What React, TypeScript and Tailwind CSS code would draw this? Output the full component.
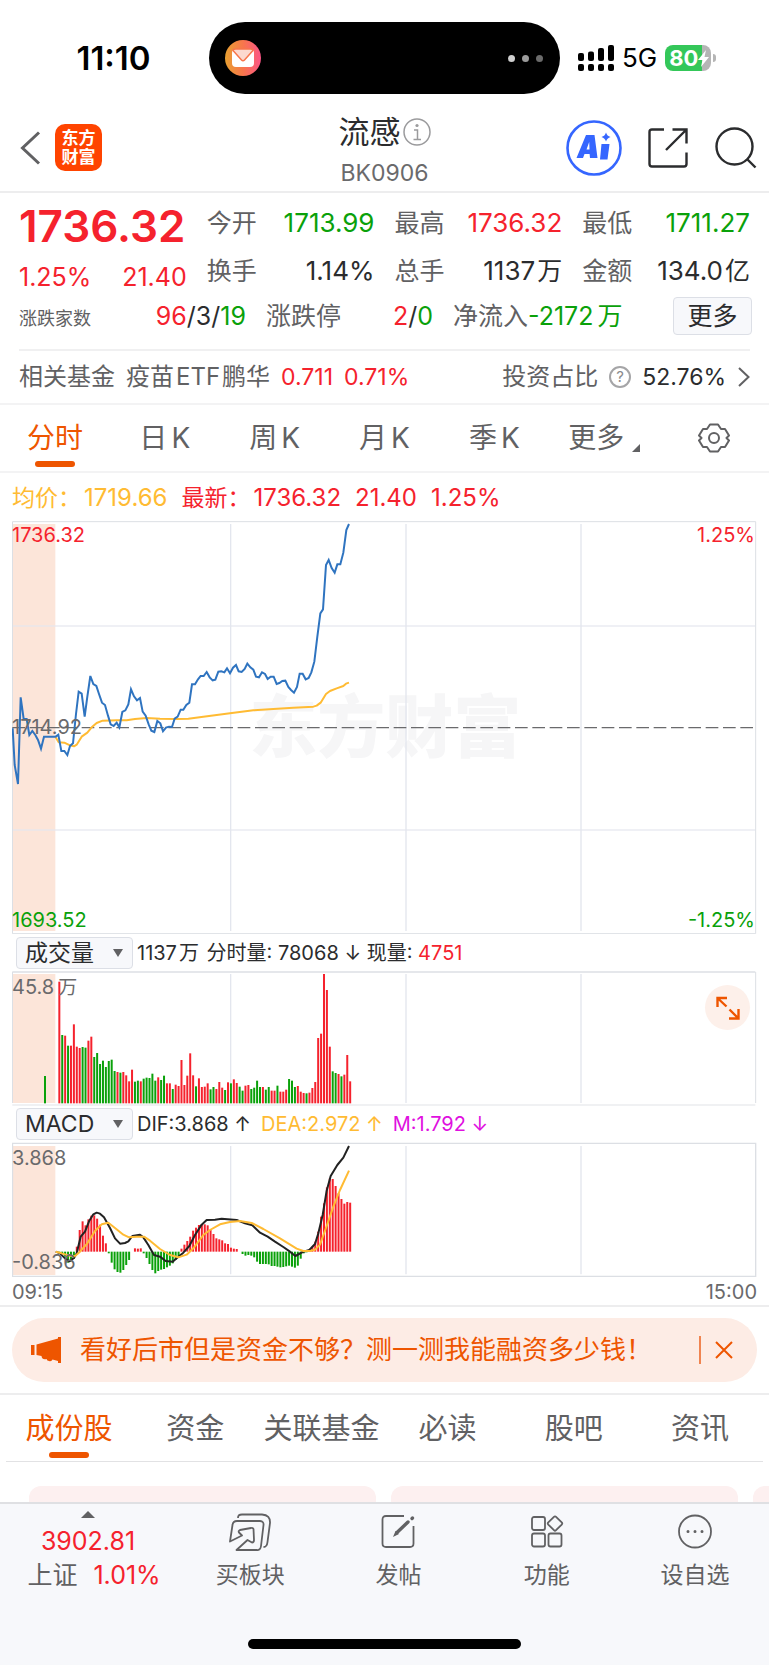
import React from 'react';

const RED = '#f5222d';
const GREEN = '#0aa10a';
const GRID = '#e3e6ee';

// First bar of the session and the distance between two bars, in chart units
const BAR_START = 178;
const BAR_STEP = 8.725;

const PRICE_LINE =
    '38,655 44,765 54,822 62,562 71,627 80,627 88,675 97,663 106,675 114,690 123,716 132,680 167,680 175,674 184,723 193,723 202,735 210,708 219,700 228,612 236,545 245,551 254,620 262,560 271,498 280,522 289,528 297,552 306,578 315,585 324,617 332,643 341,648 350,638 358,652 367,606 376,601 385,583 393,538 402,559 411,571 420,564 428,605 437,617 446,643 454,662 463,666 472,633 481,640 489,664 498,653 507,650 516,651 524,626 533,620 542,599 550,599 559,585 568,578 576,523 585,523 594,508 602,498 611,498 620,486 629,502 638,511 646,509 655,485 664,484 673,487 681,475 690,490 699,473 708,465 716,484 725,486 734,477 742,461 751,472 760,479 768,500 777,502 786,487 795,492 803,507 812,500 821,500 830,522 838,519 847,513 856,512 865,531 873,540 882,548 891,531 899,491 908,491 917,508 926,504 934,487 943,455 952,380 961,310 969,298 978,165 986,150 995,174 1004,188 1012,163 1021,163 1030,128 1039,60 1047,42';

const AVERAGE_LINE =
    '167,682 176,697 193,698 210,706 222,709 230,704 245,680 262,668 275,652 290,639 308,632 350,631 380,631 405,627 440,624 480,626 530,627 565,626 610,620 690,610 760,601 820,597 880,593 940,590 950,587 962,578 978,552 990,543 1010,535 1030,528 1038,521 1047,518';

const DIF_LINE =
    '167,455 180,460 195,475 208,484 222,474 230,460 242,410 255,395 268,362 280,343 290,338 300,341 312,352 330,384 345,415 360,431 375,429 385,424 397,408 420,404 430,412 445,435 462,465 480,470 497,483 518,485 535,470 550,458 568,438 585,405 605,374 620,360 645,359 665,356 710,360 735,370 757,376 780,398 803,410 825,425 850,441 870,455 886,468 897,462 910,455 928,450 945,432 955,400 968,345 980,272 992,228 1012,195 1030,173 1047,138';

const DEA_LINE =
    '167,455 185,460 208,467 225,468 240,455 262,430 285,393 305,373 325,368 345,384 370,404 387,412 410,410 432,410 450,422 480,447 510,465 535,472 560,464 580,445 610,405 630,390 660,373 690,366 720,363 755,369 790,387 840,415 890,446 910,453 930,453 945,449 960,434 980,378 1000,320 1020,270 1047,212';

const VOLUME = [
    185, 345, 347, 377, 377, 313, 380, 384, 381, 383, 362, 350, 411, 399, 432, 422, 441, 423, 419, 453,
    456, 458, 456, 466, 484, 449, 485, 482, 484, 476, 473, 474, 461, 482, 472, 480, 467, 490, 490, 507,
    494, 498, 420, 495, 467, 400, 466, 499, 475, 501, 500, 490, 508, 501, 507, 486, 503, 510, 487, 490,
    478, 489, 500, 512, 497, 495, 507, 503, 482, 501, 501, 509, 501, 512, 512, 497, 515, 515, 509, 477,
    482, 501, 498, 515, 519, 520, 518, 504, 486, 354, 341, 162, 210, 380, 454, 459, 462, 469, 464, 405,
    484,
];

// One letter per volume bar: r = up, g = down
const VOLUME_SIDE =
    'rgrgrrrrggrrgggggggg' + 'rgrrrrggrgggggrggrrg' + 'rrrrrrrgrrrrggrrrgrg' + 'rrggrrggggrggrrgrrrg' + 'ggrrrgrrrrrrrrggrgrrr';

const MACD = [
    457, 462, 470, 488, 484, 476, 440, 390, 364, 376, 358, 347, 346, 356, 374, 407, 430, 460, 488, 508,
    516, 518, 510, 495, 480, 455, 445, 446, 445, 460, 474, 492, 510, 520, 513, 509, 507, 502, 497, 490,
    480, 470, 446, 434, 423, 410, 392, 383, 375, 372, 373, 376, 390, 402, 415, 418, 421, 430, 432, 443,
    446, 447, 455, 462, 467, 465, 467, 472, 485, 492, 492, 492, 493, 498, 498, 500, 502, 501, 499, 497,
    500, 503, 497, 476, 460, 457, 448, 440, 425, 395, 350, 310, 262, 235, 237, 258, 280, 297, 311, 306,
    308,
];

const QUOTES = [
    { label: '今开', value: '1713.99', unit: '', color: 'text-[#0aa10a]' },
    { label: '最高', value: '1736.32', unit: '', color: 'text-[#f5222d]' },
    { label: '最低', value: '1711.27', unit: '', color: 'text-[#0aa10a]' },
    { label: '换手', value: '1.14%', unit: '', color: 'text-[#2b2c2e]' },
    { label: '总手', value: '1137', unit: '万', color: 'text-[#2b2c2e]' },
    { label: '金额', value: '134.0', unit: '亿', color: 'text-[#2b2c2e]' },
];

const SECTION_TABS = ['成份股', '资金', '关联基金', '必读', '股吧', '资讯'];

function StatusBar() {
    return (
        <div className="flex h-[94px] items-center pt-[22px] text-black">
            <div className="flex-1 pl-[18px] text-center text-[33px] font-semibold">11:10</div>
            <div className="flex h-[72px] w-[351px] items-center justify-between rounded-full bg-black pr-[17px] pl-4">
                <svg viewBox="0 0 36 36" className="size-9" aria-hidden="true">
                    <defs>
                        <linearGradient id="mail" x1="0" y1="0" x2="1" y2="0">
                            <stop offset="0" stopColor="#e8a030" />
                            <stop offset="0.5" stopColor="#f8764c" />
                            <stop offset="1" stopColor="#fb5586" />
                        </linearGradient>
                    </defs>
                    <circle cx="18" cy="18" r="18" fill="url(#mail)" />
                    <rect x="7" y="9" width="22" height="18" rx="4" fill="#fff" />
                    <path d="M8 10.500Q8 9 11 9H25Q28 9 28 10.500L19.500 20Q18 21.500 16.500 20Z" fill="#fcd9cf" stroke="#f8764c" strokeWidth="1.500" />
                </svg>
                <span className="flex gap-[7px]">
                    <i className="size-[7px] rounded-full bg-[#cfcfcf]" />
                    <i className="size-[7px] rounded-full bg-[#9b9b9b]" />
                    <i className="size-[7px] rounded-full bg-[#6b6b6b]" />
                </span>
            </div>
            <div className="flex flex-1 items-center pl-[18px]">
                <svg viewBox="0 0 36 26" className="h-[26px] w-9" aria-hidden="true">
                    <rect x="0" y="8" width="6" height="8" rx="2" />
                    <rect x="10" y="6.500" width="6" height="9.500" rx="2" />
                    <rect x="20" y="3" width="6" height="13" rx="2" />
                    <rect x="30" y="0" width="6" height="16" rx="2" />
                    <rect x="0" y="19" width="6" height="7" rx="2" />
                    <rect x="10" y="19" width="6" height="7" rx="2" />
                    <rect x="20" y="19" width="6" height="7" rx="2" />
                    <rect x="30" y="19" width="6" height="7" rx="2" />
                </svg>
                <span className="ml-2 text-[26px]">5G</span>
                <span className="ml-2 flex h-[26px] w-[46px] items-center rounded-lg bg-linear-to-r from-[#34c759] from-80% to-[#b5b5b5] to-80% pl-1 text-[22px] font-bold text-white">
                    80
                    <svg viewBox="0 0 11 17" className="h-[17px] w-[11px]" fill="#fff" aria-hidden="true">
                        <path d="M8 0L0 10H4.500L3 17L11 7H6.500Z" />
                    </svg>
                </span>
                <i className="ml-0.5 h-2 w-[3px] rounded-r-full bg-[#b5b5b5]" />
            </div>
        </div>
    );
}

function Header() {
    return (
        <header className="flex h-[99px] items-center justify-between border-b-2 border-[#ededee] px-3 pt-2.5">
            <div className="flex flex-1 items-center gap-3.5">
                <button type="button" aria-label="返回" className="ml-2">
                    <svg viewBox="0 0 21 34" className="h-[34px] w-[21px]" fill="none" stroke="#616163" strokeWidth="3">
                        <path d="M19 1.500L2.500 17L19 32.500" />
                    </svg>
                </button>
                <div className="flex size-[47px] flex-col items-center justify-center rounded-[10px] bg-[#ff4400] text-[17px] leading-[19px] font-bold text-white">
                    <span>东方</span>
                    <span>财富</span>
                </div>
            </div>
            <div className="flex flex-col items-center pt-1.5">
                <h1 className="flex items-center text-[31px] leading-[34px] text-[#2b2c2e]">
                    流感
                    <svg viewBox="0 0 28 28" className="ml-0.5 size-7" fill="none" stroke="#9b9b9d" strokeWidth="1.500" aria-hidden="true">
                        <circle cx="14" cy="14" r="13" />
                        <circle cx="14" cy="7.500" r="1.600" fill="#9b9b9d" stroke="none" />
                        <path d="M11 12H14.500V21.500M10.500 21.500H18" />
                    </svg>
                </h1>
                <span className="mt-2.5 text-[23px] leading-[28px] text-[#6a6a6c]">BK0906</span>
            </div>
            <div className="flex flex-1 items-center justify-end">
                <button type="button" aria-label="AI">
                    <svg viewBox="0 0 56 56" className="size-14" fill="#3566ff">
                        <circle cx="28" cy="28" r="26.500" fill="none" stroke="#3566ff" strokeWidth="2.600" />
                        <path d="M20 15H28.500L31.500 38H24L23.600 34H18.500L17 38H10.500ZM23.200 22L20.500 29.500H23.500Z" fillRule="evenodd" />
                        <path d="M35.500 24H43.500L41.500 39.500H34Z" />
                        <path d="M40 12.500Q41 16 44.500 17Q41 18 40 21.500Q39 18 35.500 17Q39 16 40 12.500Z" />
                    </svg>
                </button>
                <button type="button" aria-label="分享" className="ml-[26px]">
                    <svg viewBox="0 0 40 40" className="size-10" fill="none" stroke="#2b2c2e" strokeWidth="2.400">
                        <path d="M16 1.500H4Q1.500 1.500 1.500 4V36Q1.500 38.500 4 38.500H36Q38.500 38.500 38.500 36V24.500M24.500 1.500H38.500V15.500M38 2L18 22" />
                    </svg>
                </button>
                <button type="button" aria-label="搜索" className="ml-[27px]">
                    <svg viewBox="0 0 42 42" className="size-[42px]" fill="none" stroke="#2b2c2e" strokeWidth="2.400">
                        <circle cx="19.500" cy="19.500" r="18" />
                        <path d="M32 32L40.500 40.500" />
                    </svg>
                </button>
            </div>
        </header>
    );
}

function QuotePanel() {
    return (
        <section className="border-b-2 border-[#f3f3f4] px-[19px] pt-1.5 text-[25px]">
            <div className="grid grid-cols-4 gap-x-5">
                <div className="row-span-2 -mb-1.5 text-[#f5222d]">
                    <div className="text-[44px] leading-[54px] font-semibold">1736.32</div>
                    <div className="flex justify-between leading-[48px]">
                        <span>1.25%</span>
                        <span>21.40</span>
                    </div>
                </div>
                {QUOTES.map((quote) => (
                    <div key={quote.label} className="flex h-12 items-center justify-between whitespace-nowrap">
                        <span className="text-[#616163]">{quote.label}</span>
                        <span className={quote.color}>
                            <span className="text-[26px]">{quote.value}</span>
                            {quote.unit && <span className="ml-0.5">{quote.unit}</span>}
                        </span>
                    </div>
                ))}
            </div>
            <div className="flex items-center gap-5 border-b-2 border-[#f0f0f1] pt-0.5 pb-3.5 leading-[38px] whitespace-nowrap">
                <div className="flex w-[227px] items-center justify-between">
                    <span className="pt-1.5 text-lg leading-8 text-[#616163]">涨跌家数</span>
                    <span className="text-[#2b2c2e]">
                        <span className="text-[#f5222d]">96</span>/3/<span className="text-[#0aa10a]">19</span>
                    </span>
                </div>
                <div className="flex w-[167px] justify-between">
                    <span className="text-[#616163]">涨跌停</span>
                    <span className="text-[#2b2c2e]">
                        <span className="text-[#f5222d]">2</span>/<span className="text-[#0aa10a]">0</span>
                    </span>
                </div>
                <div>
                    <span className="text-[#616163]">净流入</span>
                    <span className="text-[#0aa10a]">
                        -2172<span className="ml-1">万</span>
                    </span>
                </div>
                <button type="button" className="-mr-0.5 ml-auto h-[38px] w-[79px] rounded border border-[#dcdfe6] bg-[#f7f8fb] leading-9 text-[#2b2c2e]">
                    更多
                </button>
            </div>
            <div className="flex h-[52px] items-center text-2xl whitespace-nowrap">
                <a href="#funds" className="flex items-center gap-[11px] text-[#f5222d]">
                    <span className="text-[#616163]">相关基金</span>
                    <span className="text-[#616163]">
                        疫苗<span className="mx-0.5">ETF</span>鹏华
                    </span>
                    <span className="text-[23px]">0.711</span>
                    <span className="text-[23px]">0.71%</span>
                </a>
                <a href="#ratio" className="ml-auto flex items-center text-[#2b2c2e]">
                    <span className="text-[#616163]">投资占比</span>
                    <span className="mx-[11px] flex size-[22px] items-center justify-center rounded-full border-2 border-[#a5a5a7] text-[15px] text-[#8a8a8c]">?</span>
                    <span className="text-[23px]">52.76%</span>
                    <svg viewBox="0 0 12 20" className="ml-3 h-5 w-3" fill="none" stroke="#616163" strokeWidth="2" aria-hidden="true">
                        <path d="M1 1L10.500 10L1 19" />
                    </svg>
                </a>
            </div>
        </section>
    );
}

function PeriodTabs() {
    return (
        <nav className="grid h-[68px] grid-cols-7 border-b-2 border-[#f3f3f4] text-[28px] text-[#616163]">
            <button type="button" className="relative text-[#ee5500]">
                分时
                <i className="absolute bottom-1 left-1/2 h-1.5 w-10 -translate-x-1/2 rounded-full bg-[#ee5500]" />
            </button>
            {['日', '周', '月', '季'].map((period) => (
                <button key={period} type="button">
                    {period}
                    <span className="ml-1">K</span>
                </button>
            ))}
            <button type="button" className="flex items-center justify-center gap-2">
                更多
                <svg viewBox="0 0 8 8" className="mt-5 size-2" fill="#616163" aria-hidden="true">
                    <path d="M8 0V8H0Z" />
                </svg>
            </button>
            <button type="button" aria-label="设置" className="flex items-center justify-center">
                <svg viewBox="0 0 32 30" className="h-[30px] w-8" fill="none" stroke="#616163" strokeWidth="2" strokeLinejoin="round">
                    <path d="M12 1.500H20L23 6H27L31 12.500L28.500 15L31 17.500L27 24H23L20 28.500H12L9 24H5L1 17.500L3.500 15L1 12.500L5 6H9Z" />
                    <circle cx="16" cy="15" r="5" />
                </svg>
            </button>
        </nav>
    );
}

function PriceChart() {
    return (
        <div className="relative h-[413px] text-xl leading-6">
            <svg viewBox="36 33 2235 1239" preserveAspectRatio="none" className="size-full" fill="none" aria-hidden="true">
                <rect x="37" y="42" width="129" height="1221" fill="#fce5d9" />
                <text x="1156" y="727" textAnchor="middle" fontSize="204" fontWeight="900" fill="#f6f6f7">
                    东方财富
                </text>
                <path d="M37 348H2266M37 960H2266" stroke={GRID} strokeWidth="5" opacity="0.8" />
                <path d="M692 42V1263M1218 42V1263M1743 42V1263" stroke={GRID} strokeWidth="4" />
                <path d="M37.500 35H2267V1271H37.500Z" stroke="#dcdfe4" strokeWidth="3" />
                <path d="M37 653H2266" stroke="#6a6a6c" strokeWidth="3.500" strokeDasharray="38 14" />
                <polyline points={AVERAGE_LINE} stroke="#ffbb33" strokeWidth="6" strokeLinejoin="round" />
                <polyline points={PRICE_LINE} stroke="#2f74c0" strokeWidth="6" />
            </svg>
            <span className="absolute top-0.5 left-0 text-[#f5222d]">1736.32</span>
            <span className="absolute top-0.5 right-0.5 text-[#f5222d]">1.25%</span>
            <span className="absolute top-[194px] left-0 text-[#6a6a6c]">1714.92</span>
            <span className="absolute bottom-0.5 left-0 text-[#0aa10a]">1693.52</span>
            <span className="absolute right-0.5 bottom-0.5 text-[#0aa10a]">-1.25%</span>
        </div>
    );
}

function IndicatorSelect({ label, value }: { label: string; value: string }) {
    return (
        <span className="relative ml-1 flex">
            <select aria-label={label} className="h-8 w-[117px] appearance-none rounded border border-[#dcdfe6] bg-[#f7f8fb] pl-2 text-[23px] leading-7 text-[#2b2c2e]">
                <option>{value}</option>
            </select>
            <svg viewBox="0 0 10 8" className="pointer-events-none absolute top-3 right-2.5 h-2 w-2.5" fill="#616163" aria-hidden="true">
                <path d="M0 0H10L5 8Z" />
            </svg>
        </span>
    );
}

function VolumeChart() {
    return (
        <div className="relative h-[135px]">
            <svg viewBox="36 153 2235 405" preserveAspectRatio="none" className="size-full" fill="none" aria-hidden="true">
                <rect x="37" y="162" width="129" height="387" fill="#fce5d9" />
                <path d="M692 162V549M1218 162V549M1743 162V549" stroke={GRID} strokeWidth="4" />
                <path d="M37 156H2266" stroke="#dcdfe4" strokeWidth="5" />
                <path d="M37 555H2266" stroke="#ebecef" strokeWidth="4" />
                <path d="M37.500 156V549M2267 156V549" stroke="#dcdfe4" strokeWidth="3" />
                <rect x="132" y="468" width="6" height="82" fill={GREEN} />
                {VOLUME.map((top, idx) => (
                    <rect
                        key={idx}
                        x={BAR_START + idx * BAR_STEP - 3}
                        y={top}
                        width="6"
                        height={550 - top}
                        fill={VOLUME_SIDE[idx] === 'r' ? RED : GREEN}
                    />
                ))}
            </svg>
            <span className="absolute top-0.5 left-0 text-[19px] leading-6 text-[#6a6a6c]">
                <span className="text-xl">45.8</span>
                <span className="ml-1">万</span>
            </span>
            <button type="button" aria-label="全屏" className="absolute top-3.5 right-[7px] flex size-[45px] items-center justify-center rounded-full bg-[#fdf0ea]">
                <svg viewBox="0 0 24 24" className="size-6" fill="none" stroke="#ee5500" strokeWidth="2.400">
                    <path d="M1.500 11V2H11M2 2.500L10.500 10.500M22.500 13V22.500H13M22 22L13.500 13.500" />
                </svg>
            </button>
        </div>
    );
}

function MacdChart() {
    return (
        <div className="relative h-[135px] text-xl leading-6 text-[#6a6a6c]">
            <svg viewBox="36 126 2235 405" preserveAspectRatio="none" className="size-full" fill="none" aria-hidden="true">
                <rect x="37" y="138" width="129" height="387" fill="#fce5d9" />
                <path d="M692 138V523M1218 138V523M1743 138V523" stroke={GRID} strokeWidth="4" />
                <path d="M37.500 130H2267V529H37.500Z" stroke="#dcdfe4" strokeWidth="4" />
                {MACD.map((end, idx) => (
                    <rect
                        key={idx}
                        x={BAR_START + idx * BAR_STEP - 3}
                        y={Math.min(end, 455)}
                        width="6"
                        height={Math.abs(end - 455)}
                        fill={end < 455 ? RED : GREEN}
                    />
                ))}
                <polyline points={DIF_LINE} stroke="#222" strokeWidth="6" strokeLinejoin="round" />
                <polyline points={DEA_LINE} stroke="#ffbb33" strokeWidth="6" strokeLinejoin="round" />
            </svg>
            <span className="absolute top-1 left-0">3.868</span>
            <span className="absolute bottom-[3px] left-0">-0.836</span>
        </div>
    );
}

function Charts() {
    return (
        <section className="border-b-2 border-[#ededee] px-3">
            <div className="flex h-12 items-center gap-3.5 pt-0.5 text-2xl whitespace-nowrap text-[#f5222d]">
                <span className="text-[#ffbb33]">
                    <span className="mr-[3px] text-[23px]">均价：</span>1719.66
                </span>
                <span>
                    <span className="mr-[3px] text-[23px]">最新：</span>1736.32
                </span>
                <span>21.40</span>
                <span>1.25%</span>
            </div>
            <PriceChart />
            <div className="flex h-[37px] items-center gap-1 text-xl whitespace-nowrap text-[#2b2c2e]">
                <IndicatorSelect label="指标一" value="成交量" />
                <span>
                    1137<span className="mx-0.5">万</span> 分时量: 78068 ↓ 现量: <span className="text-[#f5222d]">4751</span>
                </span>
            </div>
            <VolumeChart />
            <div className="flex h-9 items-center gap-1 text-xl whitespace-nowrap text-[#2b2c2e]">
                <IndicatorSelect label="指标二" value="MACD" />
                <span>DIF:3.868 ↑</span>
                <span className="ml-1.5 text-[#ffbb33]">DEA:2.972 ↑</span>
                <span className="ml-1.5 text-[#e010e0]">M:1.792 ↓</span>
            </div>
            <MacdChart />
            <div className="flex h-7 items-center justify-between pt-0.5 text-xl text-[#6a6a6c]">
                <span>09:15</span>
                <span>15:00</span>
            </div>
        </section>
    );
}

function Banner() {
    return (
        <div className="border-b-2 border-[#ededee] px-3 py-[11px]">
            <div className="flex h-16 items-center rounded-full bg-[#fdece5] pr-6 pl-[19px] text-[26px] text-[#ee5500]">
                <svg viewBox="0 0 30 26" className="h-[26px] w-[30px]" fill="#ee5500" aria-hidden="true">
                    <path d="M0 8H3.500V18H0ZM5.500 7.500L27 1.500V0H30V26H27V24L21.500 22.500Q20.500 25 18 24Q16 24 15.500 22Q11 23 10.500 19L5.500 18Z" />
                </svg>
                <a href="#margin" className="ml-[19px] whitespace-nowrap">
                    看好后市但是资金不够？测一测我能融资多少钱！
                </a>
                <i className="ml-auto h-7 w-0.5 bg-[#f08450]" />
                <button type="button" aria-label="关闭" className="ml-3.5">
                    <svg viewBox="0 0 18 18" className="size-[18px]" fill="none" stroke="#ee5500" strokeWidth="2">
                        <path d="M1 1L17 17M17 1L1 17" />
                    </svg>
                </button>
            </div>
        </div>
    );
}

function SectionTabs() {
    return (
        <nav className="mx-1.5 grid h-[67px] grid-cols-6 border-b border-[#e2e2e4] text-[29px] whitespace-nowrap text-[#616163]">
            {SECTION_TABS.map((tab, idx) => (
                <button key={tab} type="button" className={idx === 0 ? 'relative text-[#ee5500]' : ''}>
                    {tab}
                    {idx === 0 && <i className="absolute bottom-[3px] left-1/2 h-1.5 w-10 -translate-x-1/2 rounded-full bg-[#ee5500]" />}
                </button>
            ))}
        </nav>
    );
}

function BottomBar() {
    return (
        <footer className="border-t-2 border-[#dfe0e3] bg-[#f7f8fb] text-[23px] text-[#616163]">
            <div className="flex pt-[7px] pb-[47px]">
                <button type="button" className="flex w-[176px] flex-col items-center text-[25px] leading-[34px]">
                    <svg viewBox="0 0 14 7" className="h-[7px] w-3.5" fill="#616163" aria-hidden="true">
                        <path d="M0 7L7 0L14 7Z" />
                    </svg>
                    <span className="mt-1.5 text-[#f5222d]">3902.81</span>
                    <span className="flex gap-4 pl-3">
                        上证 <span className="text-[#f5222d]">1.01%</span>
                    </span>
                </button>
                <div className="grid flex-1 grid-cols-4 leading-[34px]">
                    <button type="button" className="flex flex-col items-center gap-[7px]">
                        <svg viewBox="0 0 42 40" className="h-10 w-[42px]" fill="none" stroke="#616163" strokeWidth="1.800" strokeLinejoin="round">
                            <path d="M9 7Q9 3.500 13 3.500H33Q41.500 4 41 12L38.500 31Q38 36 34.500 36" />
                            <path d="M1 30.500L3.500 14Q4 10 8 10H31Q35 10.500 34.500 14L32 35Q31.500 39.500 27.500 39H7.500L18.500 29L23 31.500Q25 31.500 25 29L24.500 18Q24 16.500 22 17L11 19Q9 20 10 21.500L13 24.500Z" />
                        </svg>
                        买板块
                    </button>
                    <button type="button" className="flex flex-col items-center gap-[7px]">
                        <svg viewBox="0 0 34 40" className="h-10 w-[34px]" fill="none" stroke="#616163" strokeWidth="1.800">
                            <path d="M23 5H5Q1.500 5 1.500 8.500V32.500Q1.500 36 5 36H29Q32.500 36 32.500 32.500V15" />
                            <path d="M27 11L16 21.500" strokeWidth="3.400" strokeLinecap="round" />
                            <path d="M14.500 20L12 26L18 23Z" fill="#616163" stroke="none" />
                            <path d="M31 7.500L31.500 7" strokeWidth="3.400" strokeLinecap="round" />
                        </svg>
                        发帖
                    </button>
                    <button type="button" className="flex flex-col items-center gap-[7px]">
                        <svg viewBox="0 0 34 40" className="h-10 w-[34px]" fill="none" stroke="#616163" strokeWidth="1.800">
                            <rect x="2" y="6" width="13" height="13" rx="2" />
                            <rect x="2" y="22.500" width="13" height="13" rx="2" />
                            <rect x="18.500" y="22.500" width="13" height="13" rx="2" />
                            <rect x="19.500" y="7" width="11" height="11" rx="1.500" transform="rotate(45 25 12.500)" />
                        </svg>
                        功能
                    </button>
                    <button type="button" className="flex flex-col items-center gap-[7px]">
                        <svg viewBox="0 0 34 40" className="h-10 w-[34px]" fill="none" stroke="#616163" strokeWidth="1.800">
                            <circle cx="17" cy="20.500" r="16" />
                            <path d="M10 20.500H10.010M17 20.500H17.010M24 20.500H24.010" strokeWidth="3" strokeLinecap="round" />
                        </svg>
                        设自选
                    </button>
                </div>
            </div>
            <div className="mx-auto mb-4 h-2.5 w-[273px] rounded-full bg-black" />
        </footer>
    );
}

export default function App() {
    return (
        <div className="flex h-screen flex-col overflow-hidden bg-white font-['Inter','Noto_Sans_CJK_SC',sans-serif] leading-none">
            <StatusBar />
            <Header />
            <QuotePanel />
            <PeriodTabs />
            <Charts />
            <Banner />
            <SectionTabs />
            <div className="flex min-h-0 flex-1 gap-[15px] overflow-hidden pt-6 pl-[29px]">
                <div className="w-[347px] shrink-0 rounded-t-xl bg-[#fdf0f0]" />
                <div className="w-[347px] shrink-0 rounded-t-xl bg-[#fdf0f0]" />
                <div className="w-[347px] shrink-0 rounded-t-xl bg-[#fdf0f0]" />
            </div>
            <BottomBar />
        </div>
    );
}
